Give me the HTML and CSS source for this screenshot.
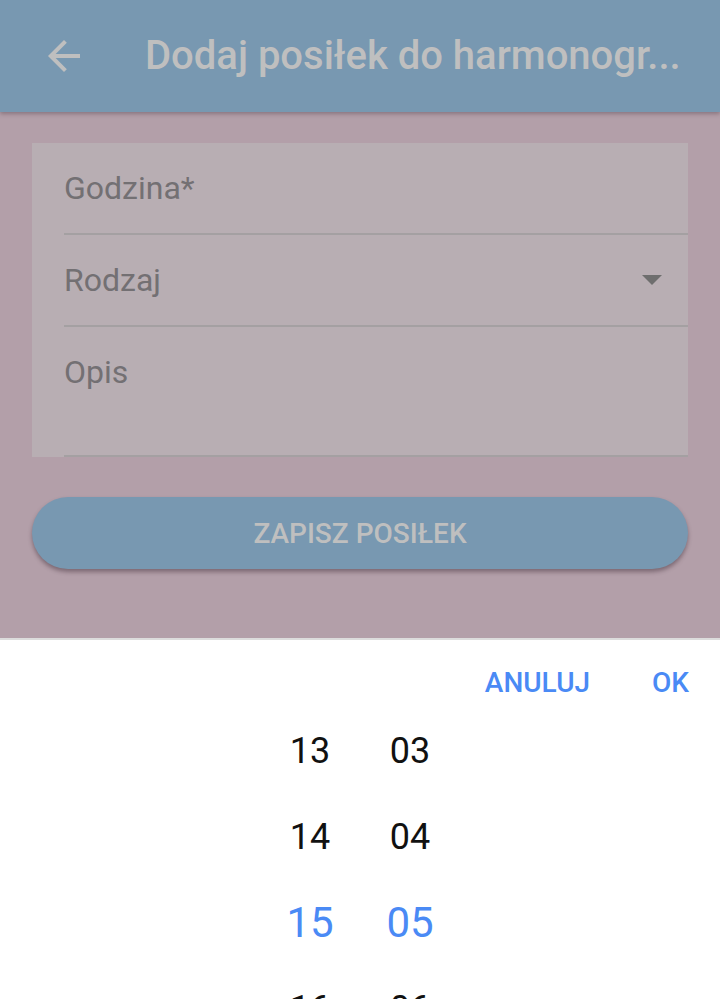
FILE: index.html
```html
<!DOCTYPE html>
<html lang="pl">
<head>
<meta charset="utf-8">
<link rel="stylesheet" href="styles.css">
</head>
<body>
<div class="screen">
  <div class="dimmed">
    <header class="appbar">
      <svg class="back" viewBox="0 0 24 24" width="48" height="48"><path d="M20 11H7.830l5.590-5.590L12 4l-8 8 8 8 1.410-1.410L7.830 13H20v-2z" fill="#bfbfbf"/></svg>
      <h1 class="title">Dodaj posiłek do harmonogr...</h1>
    </header>
    <main class="content">
      <section class="card">
        <div class="field"><span class="label">Godzina*</span></div>
        <div class="field select"><span class="label">Rodzaj</span><span class="caret"></span></div>
        <div class="field area"><span class="label">Opis</span></div>
      </section>
      <button class="save">ZAPISZ POSIŁEK</button>
    </main>
  </div>
  <div class="sheet">
    <div class="actions">
      <span class="action">ANULUJ</span>
      <span class="action">OK</span>
    </div>
    <div class="picker">
      <div class="row"><span>13</span><span>03</span></div>
      <div class="row"><span>14</span><span>04</span></div>
      <div class="row sel"><span>15</span><span>05</span></div>
      <div class="row"><span>16</span><span>06</span></div>
    </div>
  </div>
</div>
</body>
</html>
```
FILE: styles.css
```css
html, body {
  margin: 0;
  padding: 0;
  width: 720px;
  height: 999px;
  overflow: hidden;
  font-family: Roboto, "Noto Sans", sans-serif;
  background: #ffffff;
}
.screen {
  display: flex;
  flex-direction: column;
  width: 720px;
  height: 999px;
}
.dimmed {
  height: 638px;
  background: #b39fa9;
  border-bottom: 2px solid #dcdcdc;
  flex: none;
}
.appbar {
  height: 112px;
  background: #7898b1;
  display: flex;
  align-items: center;
  padding-left: 40px;
  box-sizing: border-box;
  box-shadow: 0 2px 4px rgba(60, 40, 50, 0.35);
  position: relative;
}
.back {
  flex: none;
  display: block;
}
.title {
  margin: 0 0 0 57px;
  font-size: 40px;
  line-height: 48px;
  font-weight: 500;
  color: #bfbfbf;
  white-space: nowrap;
}
.content {
  padding: 31px 32px 0;
}
.card {
  background: #b8aeb3;
  padding-left: 32px;
  height: 314px;
  box-sizing: border-box;
}
.field {
  height: 92px;
  box-sizing: border-box;
  padding-top: 25px;
  border-bottom: 2px solid #a4a0a2;
  display: flex;
  align-items: flex-start;
}
.field.area {
  height: 130px;
}
.label {
  font-size: 32px;
  line-height: 40px;
  color: #737073;
  flex: 1;
}
.caret {
  width: 0;
  height: 0;
  border-left: 10px solid transparent;
  border-right: 10px solid transparent;
  border-top: 10px solid #6e6e6e;
  margin: 15px 26px 0 0;
}
.save {
  display: block;
  margin-top: 40px;
  width: 656px;
  height: 72px;
  border: none;
  border-radius: 36px;
  background: #7898b1;
  color: #bfbfbf;
  font-family: Roboto, sans-serif;
  font-size: 28px;
  font-weight: 500;
  box-shadow: 0 3px 4px rgba(60, 40, 50, 0.45);
  padding: 0;
}
.sheet {
  flex: 1;
  background: #ffffff;
  padding-top: 23px;
}
.actions {
  display: flex;
  justify-content: flex-end;
  gap: 62px;
  padding-right: 31px;
  height: 45px;
}
.action {
  font-size: 28px;
  line-height: 40px;
  font-weight: 500;
  color: #4a8af5;
}
.picker {
  display: flex;
  flex-direction: column;
  align-items: center;
}
.row {
  display: grid;
  grid-template-columns: 100px 100px;
  height: 86px;
  line-height: 86px;
  font-size: 36px;
  color: #111111;
  text-align: center;
}
.row.sel {
  font-size: 42px;
  color: #4a8af5;
}
```
